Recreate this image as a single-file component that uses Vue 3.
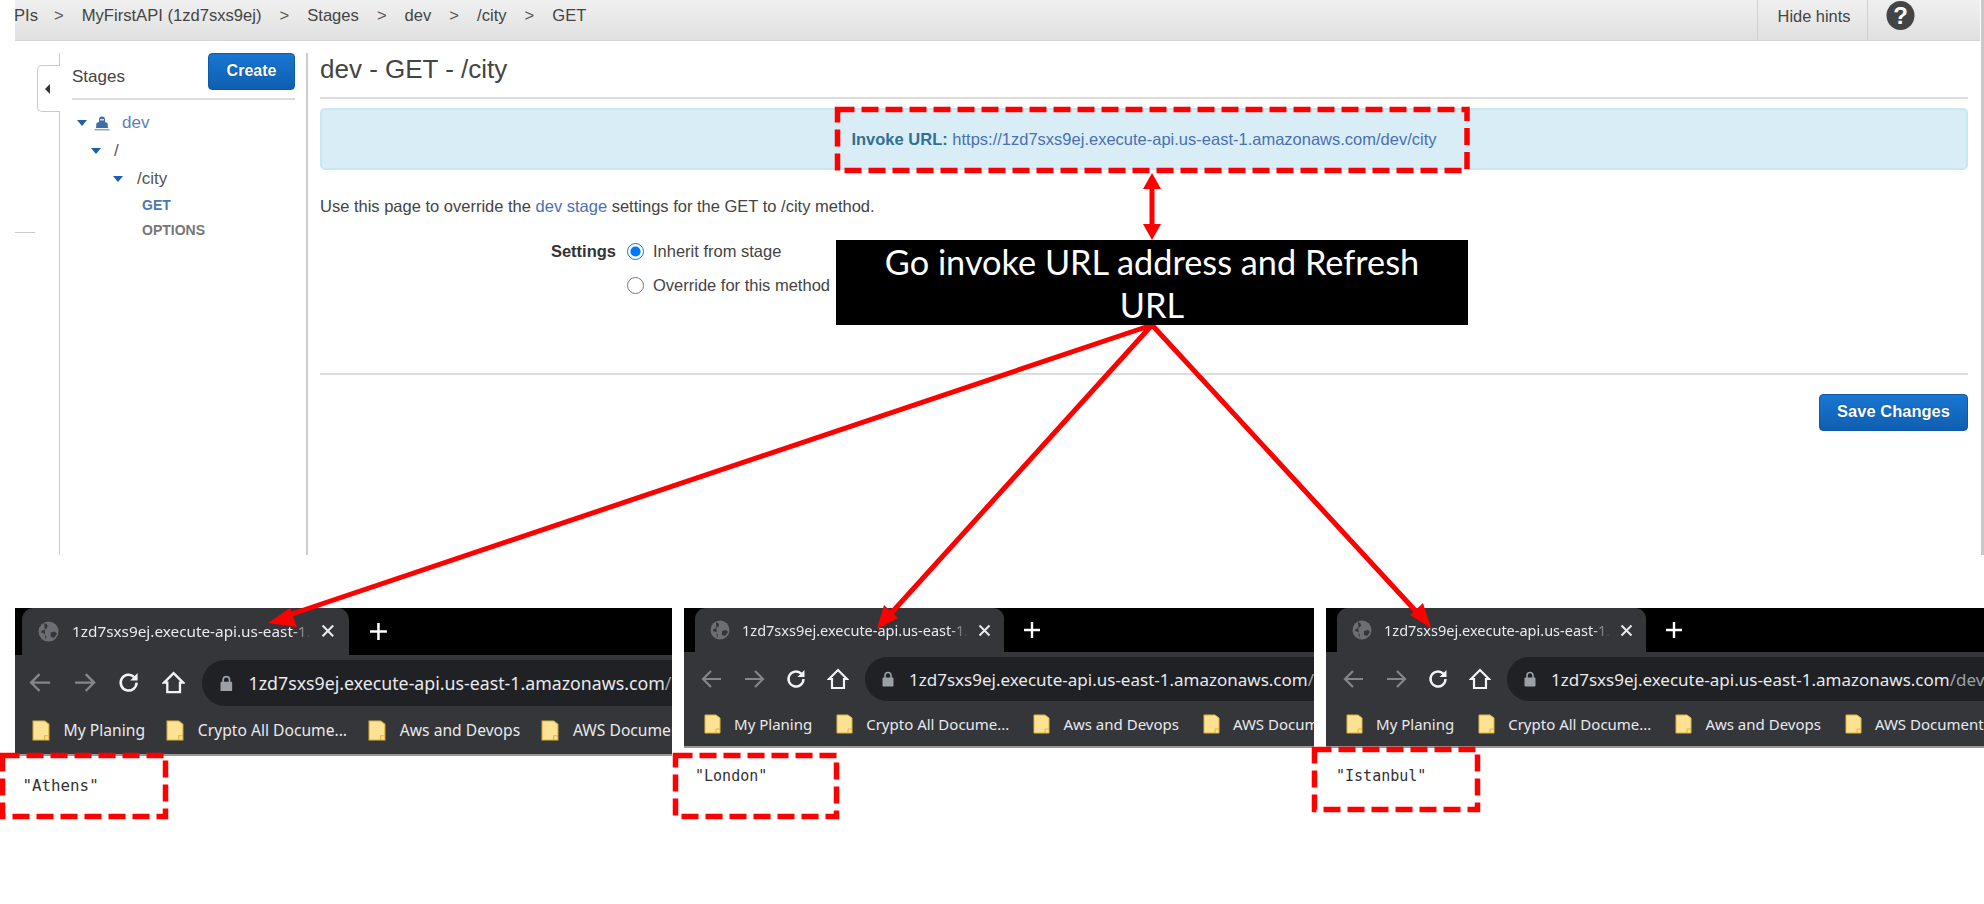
<template>
  <div class="page">
    <section class="console">
      <header class="topbar">
        <nav class="crumbs">
          <template v-for="(c, i) in crumbs" :key="c">
            <span v-if="i" class="sep">&gt;</span>
            <span>{{ c }}</span>
          </template>
        </nav>
        <button class="hints">Hide hints</button>
        <div class="help">
          <svg width="29" height="29" viewBox="0 0 29 29">
            <ellipse cx="14.5" cy="14.5" rx="14" ry="14.5" fill="#444" />
            <text x="14.5" y="22.5" text-anchor="middle" class="help-mark">?</text>
          </svg>
        </div>
      </header>

      <div class="body">
        <div class="rail">
          <div class="rail-tab"><span class="rail-arrow"></span></div>
          <div class="rail-tick"></div>
        </div>

        <aside class="side">
          <div class="side-head">
            <span class="side-title">Stages</span>
            <button class="btn create">Create</button>
          </div>
          <ul class="tree">
            <li class="row dev">
              <i class="caret"></i>
              <svg class="ship" width="16" height="16" viewBox="0 0 16 16">
                <path d="M5 4.5a3 3 0 0 1 6 0V7l2.5 1 .5 5H2l.5-5L5 7z" fill="#3f6ea6" />
                <rect x="6" y="4" width="4" height="1.5" fill="#cfe0f0" />
                <path d="M0.5 14.7h15" stroke="#8fa8c6" stroke-width="1.6" />
              </svg>
              <span>dev</span>
            </li>
            <li class="row root"><i class="caret"></i><span>/</span></li>
            <li class="row city"><i class="caret"></i><span>/city</span></li>
            <li class="method get">GET</li>
            <li class="method options">OPTIONS</li>
          </ul>
        </aside>

        <main class="main">
          <h1 class="title">dev - GET - /city</h1>
          <div class="invoke">
            <b>Invoke URL:</b>&nbsp;<a>https://1zd7sxs9ej.execute-api.us-east-1.amazonaws.com/dev/city</a>
          </div>
          <p class="intro">
            Use this page to override the <a>dev stage</a> settings for the GET to /city method.
          </p>
          <div class="settings">
            <span class="settings-label">Settings</span>
            <div class="options-list">
              <label><input type="radio" name="mode" checked />Inherit from stage</label>
              <label><input type="radio" name="mode" />Override for this method</label>
            </div>
          </div>
          <div class="actions">
            <button class="btn save">Save Changes</button>
          </div>
        </main>
      </div>
    </section>

    <section class="shots">
      <div v-for="s in shots" :key="s.city" class="shot" :class="s.cls">
        <div class="tabstrip">
          <div class="tab">
            <svg class="globe" width="20" height="20" viewBox="0 0 20 20">
              <circle cx="10" cy="10" r="9.5" fill="#6b6e72" />
              <path d="M6 2c3 1 4 3 2 5S3 8 3 11l3 1 2 3-1 3M12 11l4-1 2 2-3 4-3-1z" fill="#35363a" />
            </svg>
            <span class="tab-title">1zd7sxs9ej.execute-api.us-east-1.</span>
            <svg class="close" width="13" height="13" viewBox="0 0 13 13">
              <path d="M1.5 1.5l10 10M11.5 1.5l-10 10" stroke="#e8eaed" stroke-width="2" />
            </svg>
          </div>
          <svg class="plus" width="16" height="16" viewBox="0 0 16 16">
            <path d="M8 0v16M0 8h16" stroke="#fff" stroke-width="2.4" />
          </svg>
        </div>
        <div class="toolbar">
          <div class="navs">
            <svg width="22" height="20" viewBox="0 0 22 20">
              <path d="M20 10H3M10 2l-8 8 8 8" fill="none" stroke="#84868a" stroke-width="2.2" />
            </svg>
            <svg width="22" height="20" viewBox="0 0 22 20">
              <path d="M2 10h17M12 2l8 8-8 8" fill="none" stroke="#84868a" stroke-width="2.2" />
            </svg>
            <svg width="22" height="22" viewBox="0 0 22 22">
              <path d="M18.5 11a7.5 7.5 0 1 1-2.2-5.3" fill="none" stroke="#f1f3f4" stroke-width="2.4" />
              <path d="M19.5 2v7h-7z" fill="#f1f3f4" />
            </svg>
            <svg width="22" height="22" viewBox="0 0 22 22">
              <path d="M11 2L2 11h3v9h12v-9h3z" fill="none" stroke="#f1f3f4" stroke-width="2.2" />
            </svg>
          </div>
          <div class="omnibox">
            <svg class="lock" width="12" height="16" viewBox="0 0 12 16">
              <path d="M3 7V4.5a3 3 0 0 1 6 0V7" fill="none" stroke="#9aa0a6" stroke-width="1.6" />
              <rect x="0.5" y="6.5" width="11" height="9" rx="1" fill="#9aa0a6" />
            </svg>
            <span class="host">1zd7sxs9ej.execute-api.us-east-1.amazonaws.com</span><span class="path">/dev/city</span>
          </div>
        </div>
        <div class="bookmarks">
          <div v-for="b in bookmarks" :key="b" class="bookmark">
            <svg width="17" height="20" viewBox="0 0 17 20">
              <path d="M1 1h11l4 3v15H1z" fill="#fde293" stroke="#e0b43c" stroke-width="1" />
              <path d="M12 19v-4h4" fill="none" stroke="#e0b43c" stroke-width="1" />
            </svg>
            <span>{{ b }}</span>
          </div>
        </div>
        <pre class="result">"{{ s.city }}"</pre>
      </div>
    </section>

    <!-- annotation layer -->
    <svg class="marks" width="1984" height="904" viewBox="0 0 1984 904">
      <g fill="none" stroke="#f00" stroke-width="5.5" stroke-dasharray="17 7">
        <rect x="837.5" y="109.5" width="629.5" height="61" />
        <rect x="2.5" y="755.5" width="163" height="61" />
        <rect x="675.5" y="755.5" width="161" height="61" />
        <rect x="1314.5" y="749.5" width="163" height="60" />
      </g>
      <g stroke="#f00" stroke-width="5">
        <path d="M1152 185v43" />
        <path d="M1152 325L280 618M1152 325L885 620M1152 325L1424 620" />
      </g>
      <g fill="#f00">
        <path d="M1152 173l9 16h-18zM1152 240l9-16h-18z" />
        <path d="M268 623l22-15 7 19zM877 629l7-24 14 13zM1431 628l-21-13 13-12z" />
      </g>
    </svg>
    <div class="callout">Go invoke URL address and Refresh URL</div>
  </div>
</template>

<script setup>
const crumbs = ['PIs', 'MyFirstAPI (1zd7sxs9ej)', 'Stages', 'dev', '/city', 'GET']
const bookmarks = ['My Planing', 'Crypto All Docume...', 'Aws and Devops', 'AWS Documentation']
const shots = [
  { city: 'Athens', cls: 'athens' },
  { city: 'London', cls: 'london' },
  { city: 'Istanbul', cls: 'istanbul' }
]
</script>

<style>
html, body { margin: 0; background: #fff; }
</style>

<style scoped>
.page {
  position: relative;
  width: 1984px;
  height: 904px;
  overflow: hidden;
  background: #fff;
  font-family: "Liberation Sans", Arial, sans-serif;
}
button { font-family: inherit; cursor: pointer; }

/* console */
.console {
  height: 555px;
  padding-left: 15px;
  padding-right: 4px;
  box-sizing: border-box;
  box-shadow: inset -3px 0 0 #c8c8c8;
}
.topbar {
  display: flex;
  align-items: center;
  height: 41px;
  box-sizing: border-box;
  background: linear-gradient(#f0f0f0, #e0e0e0);
  border-bottom: 1px solid #d4d4d4;
  color: #444;
  font-size: 16.6px;
}
.crumbs { flex: 1; display: flex; gap: 18px; margin: -8px 0 0 -1px; white-space: nowrap; }
.crumbs span:nth-child(2) { margin-left: -2px; }
.sep { color: #555; }
.hints {
  width: 111px;
  height: 40px;
  padding: 0 0 8px 3px;
  background: none;
  border: 0;
  border-left: 1px solid #d0d0d0;
  border-right: 1px solid #d0d0d0;
  color: #444;
  font-size: 16.4px;
}
.help { width: 112px; height: 40px; padding-left: 18px; box-sizing: border-box; }
.help svg { display: block; margin-top: 1px; }
.help-mark { fill: #fff; font: bold 24px "Liberation Sans", sans-serif; }

.body { display: flex; height: 514px; }
.rail { position: relative; width: 44px; }
.rail-tab {
  position: absolute;
  top: 24px;
  left: 22px;
  width: 23px;
  height: 47px;
  box-sizing: border-box;
  border: 1px solid #ccc;
  border-right: 0;
  border-radius: 5px 0 0 5px;
  background: #fff;
  z-index: 1;
}
.rail-arrow {
  position: absolute;
  left: 7px;
  top: 18px;
  border: 5px solid transparent;
  border-left: 0;
  border-right: 5px solid #333;
}
.rail-tick { position: absolute; top: 191px; left: 0; width: 20px; height: 1px; background: #ccc; }

.side {
  width: 249px;
  box-sizing: border-box;
  margin-top: 12px;
  padding: 0 11px 0 12px;
  border-left: 1px solid #ccc;
  border-right: 2px solid #ccc;
}
.side-head {
  display: flex;
  align-items: center;
  justify-content: space-between;
  height: 47px;
  padding-bottom: 8px;
  box-sizing: border-box;
  border-bottom: 2px solid #ddd;
}
.side-title { font-size: 17px; color: #444; margin-top: 10px; }
.btn {
  border: 1px solid #0d5aa7;
  border-radius: 4px;
  background: linear-gradient(#1976d2, #0f5fb0);
  color: #fff;
  font-weight: bold;
  text-shadow: 0 0 1px #063a70;
}
.create { width: 87px; height: 37px; font-size: 16px; padding: 0 0 2px; }

.tree { list-style: none; margin: 0; padding: 0; font-size: 17px; }
.row { display: flex; align-items: center; height: 28px; }
.caret {
  width: 0;
  height: 0;
  border: 5.5px solid transparent;
  border-top: 6px solid #1a5fb4;
  border-bottom: 0;
}
.dev { margin-top: 9px; padding-left: 5px; color: #5a7fb8; }
.dev .ship { margin: 0 12px 0 7px; }
.root { padding-left: 19px; color: #555; }
.root span { margin-left: 13px; }
.city { padding-left: 41px; color: #555; }
.city span { margin-left: 14px; }
.method { font-size: 14px; font-weight: bold; padding-left: 70px; height: 25px; line-height: 25px; }
.get { color: #4a78b0; }
.options { color: #777; }

.main { width: 1648px; margin-left: 12px; }
.title {
  margin: 0;
  height: 58px;
  padding-top: 12px;
  box-sizing: border-box;
  border-bottom: 2px solid #ddd;
  font-size: 26px;
  font-weight: normal;
  line-height: 32px;
  color: #444;
}
.invoke {
  display: flex;
  justify-content: center;
  align-items: center;
  height: 62px;
  box-sizing: border-box;
  margin-top: 9px;
  background: #d9edf7;
  border: 2px solid #c8e8f2;
  border-radius: 5px;
  font-size: 16.5px;
  color: #31708f;
}
a { color: #4a6fb5; }
.intro { margin: 26px 0 0; font-size: 16.5px; line-height: 20px; color: #444; }
.settings { display: flex; margin-top: 20px; font-size: 16.5px; color: #444; height: 117px; }
.settings-label { width: 296px; text-align: right; font-weight: bold; color: #333; line-height: 18px; margin-top: 6px; }
.options-list { display: flex; flex-direction: column; gap: 16px; margin-left: 11px; margin-top: 6px; }
.options-list label { display: flex; align-items: center; height: 18px; }
.options-list input { width: 17px; height: 17px; margin: 0 9px 0 0; }
.actions { border-top: 2px solid #ddd; margin-top: 20px; display: flex; justify-content: flex-end; padding-top: 19px; }
.save { width: 149px; height: 37px; font-size: 16.5px; padding: 0 0 2px; }

/* browser screenshots */
.shots { display: flex; gap: 12px; margin-top: 53px; padding-left: 15px; }
.shot { width: 630px; flex: none; overflow: hidden; background: #fff; height: 220px; }
.athens { zoom: 1.057; width: 621.6px; }
.istanbul { width: 658px; }
.tabstrip { display: flex; align-items: center; height: 44px; padding-left: 11px; background: #000; }
.tab {
  position: relative;
  display: flex;
  align-items: center;
  width: 309px;
  height: 44px;
  box-sizing: border-box;
  padding-left: 15px;
  background: #35363a;
  border-radius: 11px 11px 0 0;
  color: #e8eaed;
  font: 14.5px "Noto Sans", "Open Sans", sans-serif;
}
.globe { flex: none; }
.tab-title {
  margin-left: 12px;
  width: 226px;
  white-space: nowrap;
  overflow: hidden;
  -webkit-mask-image: linear-gradient(90deg, #000 92%, transparent);
  mask-image: linear-gradient(90deg, #000 92%, transparent);
}
.close { margin-left: 10px; flex: none; }
.plus { margin-left: 20px; }
.toolbar { display: flex; background: #35363a; height: 49px; padding: 5px 0 0 17px; box-sizing: border-box; }
.navs { display: flex; align-items: center; width: 164px; gap: 20px; flex: none; height: 44px; }
.omnibox {
  display: flex;
  align-items: center;
  flex: 1;
  height: 44px;
  margin-right: -40px;
  padding-left: 17px;
  border-radius: 22px 0 0 22px;
  background: #202124;
  color: #e8eaed;
  white-space: nowrap;
  overflow: hidden;
  font: 17px "Noto Sans", "Open Sans", sans-serif;
}
.lock { margin-right: 15px; flex: none; }
.path { color: #9aa0a6; }
.bookmarks {
  display: flex;
  gap: 24px;
  align-items: center;
  height: 47px;
  padding: 0 0 0 20px;
  box-sizing: border-box;
  background: #35363a;
  border-bottom: 2px solid #999;
  white-space: nowrap;
  overflow: hidden;
  color: #e8eaed;
  font: 15px "Noto Sans", "Open Sans", sans-serif;
}
.bookmark { display: flex; align-items: center; gap: 13px; }
.result {
  margin: 18px 0 0;
  font: 15px/20px "DejaVu Sans Mono", monospace;
  color: #333;
}
/* the first shot was pasted a bit larger and cropped on the left */
.athens .tabstrip { padding-left: 7px; }
.athens .toolbar { padding-left: 13px; }
.athens .bookmarks { padding-left: 16px; gap: 20px; font-size: 14.8px; }
.athens .omnibox { font-size: 16.8px; }
.athens .result { padding-left: 7px; }
.london .result { padding-left: 11px; }
.istanbul .result { padding-left: 10px; }

/* annotations sit above the pasted shots */
.marks { position: absolute; inset: 0; pointer-events: none; }
.callout {
  position: absolute;
  left: 836px;
  top: 240px;
  width: 632px;
  height: 85px;
  padding: 0 40px;
  box-sizing: border-box;
  display: flex;
  align-items: center;
  justify-content: center;
  text-align: center;
  background: #000;
  color: #fff;
  font: 34.3px/43px Lato, "Open Sans", sans-serif;
}
</style>
